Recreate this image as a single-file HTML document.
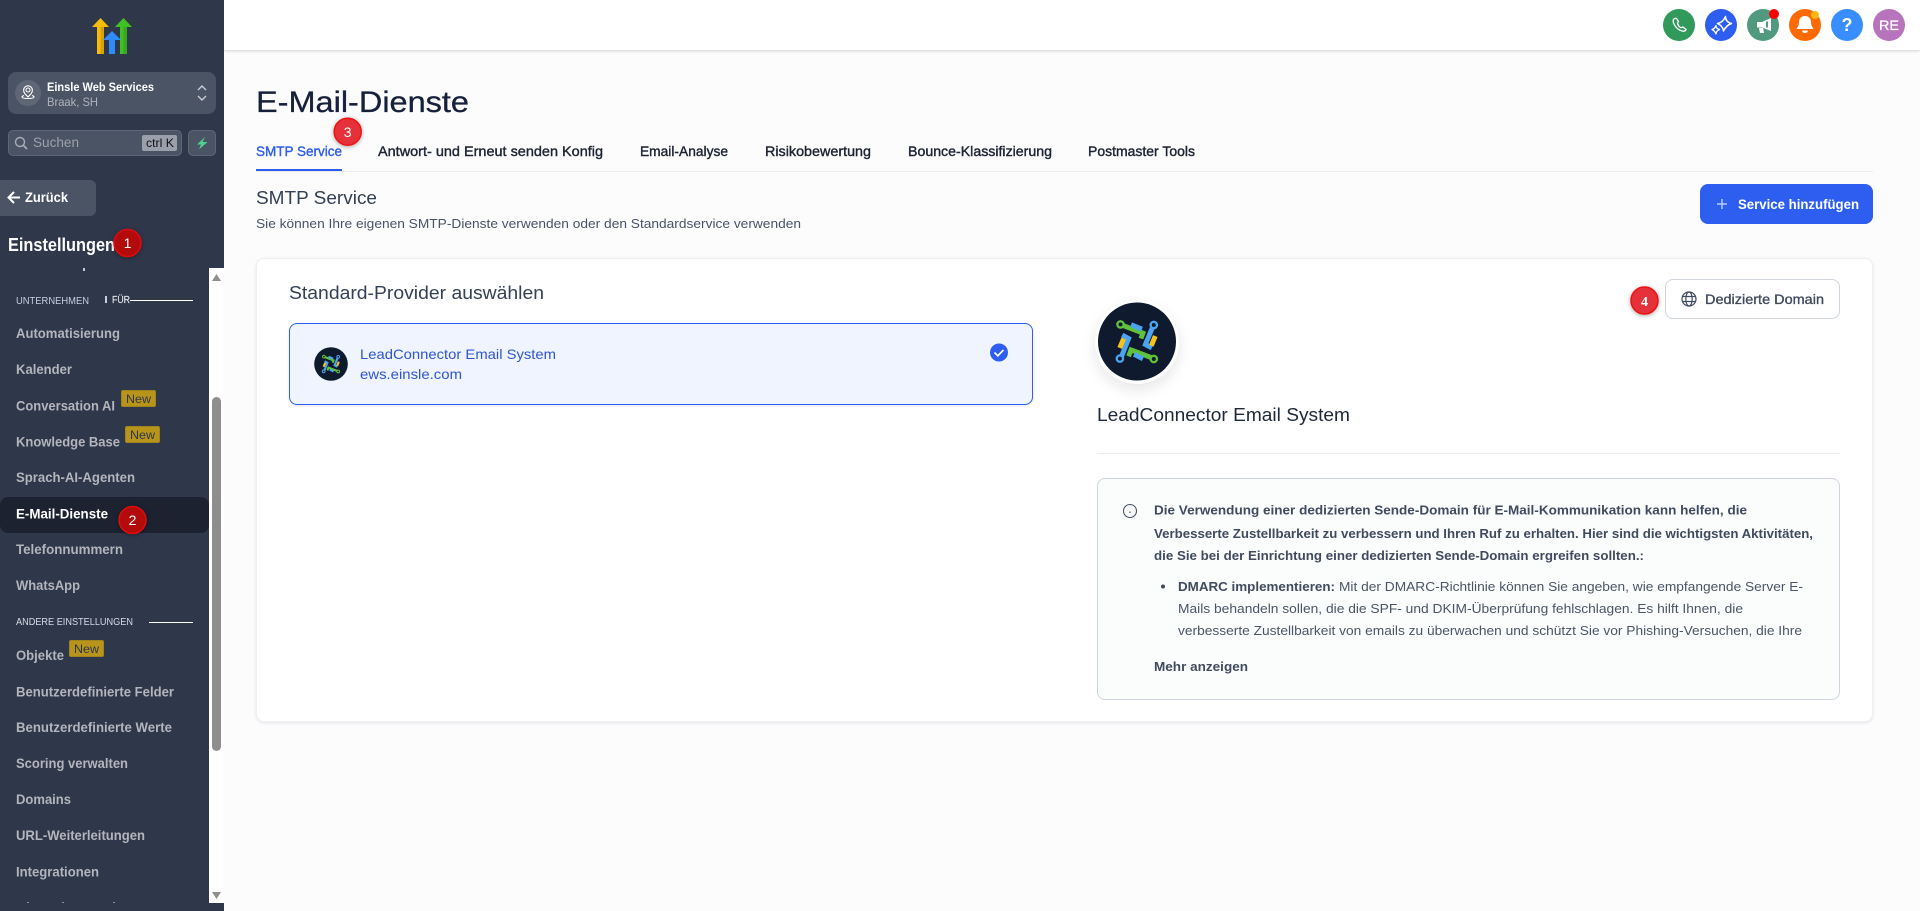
<!DOCTYPE html>
<html lang="de">
<head>
<meta charset="utf-8">
<title>E-Mail-Dienste</title>
<style>
html,body{margin:0;padding:0;width:1920px;height:911px;overflow:hidden;background:#fcfcfd;font-family:"Liberation Sans",sans-serif}
.a{position:absolute;box-sizing:border-box}
svg.o{position:absolute;left:0;top:0;width:1920px;height:911px}
text{font-family:"Liberation Sans",sans-serif;white-space:pre}
.nav{font-size:14px;font-weight:700;fill:#b3b5bc}
.tab{font-size:14px;fill:#1d2433;stroke:#1d2433;stroke-width:.4}
.ib{font-size:13px;fill:#414b5e;font-weight:700}
.ir{font-size:13px;fill:#4b5565}
.new{font-size:12px;fill:#2f374a}
.bn{font-size:14px;fill:#fff;text-anchor:middle}
</style>
</head>
<body>
<div class="a" style="left:224px;top:0;width:1696px;height:50px;background:#fff;box-shadow:0 1px 3px rgba(16,24,40,.18)"></div>
<div class="a" style="left:0;top:0;width:224px;height:911px;background:#2f374a"></div>
<div class="a" style="left:8px;top:72px;width:208px;height:42px;background:#4b5465;border-radius:8px"></div>
<div class="a" style="left:15px;top:80px;width:26px;height:26px;background:#5f6776;border-radius:50%"></div>
<div class="a" style="left:8px;top:130px;width:174px;height:26px;background:#4b5465;border:1px solid #5f6776;border-radius:5px"></div>
<div class="a" style="left:142px;top:135px;width:35px;height:16px;background:#9aa0ab;border-radius:2px"></div>
<div class="a" style="left:188px;top:130px;width:28px;height:26px;background:#4b5465;border:1px solid #5f6776;border-radius:5px"></div>
<div class="a" style="left:0;top:180px;width:96px;height:36px;background:#4b5465;border-radius:0 6px 6px 0"></div>
<div class="a" style="left:0;top:497px;width:209px;height:36px;background:#1d2230;border-radius:8px"></div>
<div class="a" style="left:209px;top:268px;width:15px;height:635px;background:#fff"></div>
<div class="a" style="left:212px;top:397px;width:9px;height:354px;background:#8e8e8e;border-radius:5px"></div>
<div class="a" style="left:121px;top:390px;width:35px;height:17px;background:#b8941a;border:1px solid #a08420;border-radius:2px"></div>
<div class="a" style="left:125px;top:426px;width:35px;height:17px;background:#b8941a;border:1px solid #a08420;border-radius:2px"></div>
<div class="a" style="left:69px;top:640px;width:35px;height:17px;background:#b8941a;border:1px solid #a08420;border-radius:2px"></div>

<div class="a" style="left:256px;top:171px;width:1617px;height:1px;background:#eaecf0"></div>
<div class="a" style="left:256px;top:169px;width:86px;height:2px;background:#2d5ef0"></div>
<div class="a" style="left:1700px;top:184px;width:173px;height:40px;background:#2d5ef0;border-radius:8px"></div>
<div class="a" style="left:256px;top:258px;width:1617px;height:464px;background:#fff;border:1px solid #eef0f3;border-radius:8px;box-shadow:0 1px 3px rgba(16,24,40,.1)"></div>
<div class="a" style="left:289px;top:323px;width:744px;height:82px;background:#eff4ff;border:1px solid #2d5ef0;border-radius:8px;box-shadow:0 1px 2px rgba(16,24,40,.1)"></div>
<div class="a" style="left:1665px;top:279px;width:175px;height:40px;background:#fff;border:1px solid #d0d5dd;border-radius:8px"></div>
<div class="a" style="left:1097px;top:453px;width:743px;height:1px;background:#eaecf0"></div>
<div class="a" style="left:1097px;top:478px;width:743px;height:222px;background:#fbfdfd;border:1px solid #d0d5dd;border-radius:8px"></div>
<div class="a" style="left:1095px;top:300px;width:84px;height:84px;background:#fff;border-radius:50%;box-shadow:0 6px 14px rgba(16,24,40,.1)"></div>

<svg class="o" viewBox="0 0 1920 911" xmlns="http://www.w3.org/2000/svg">
<defs>
<symbol id="lc" viewBox="-40 -40 80 80">
<circle r="39.5" fill="#101a2e"/>
<g fill="none" stroke-width="5">
<path d="M-15-16.5L6-8.5L4-3" stroke="#5fc23a"/>
<circle cx="-16.7" cy="-17.3" r="3.2" fill="#101a2e" stroke="#5fc23a" stroke-width="2.4"/>
<path d="M15.800-14.500L8.500 3L15 6.500" stroke="#4aa5ee"/>
<circle cx="17" cy="-16.7" r="3.2" fill="#101a2e" stroke="#4aa5ee" stroke-width="2.4"/>
<path d="M15 16.500L-6 8.500L-8.500 15" stroke="#5fc23a"/>
<circle cx="17" cy="17.700" r="3.2" fill="#101a2e" stroke="#5fc23a" stroke-width="2.4"/>
<path d="M-15.800 15.500L-8.500-3L-15-6.500" stroke="#4aa5ee"/>
<circle cx="-17.300" cy="17.300" r="3.2" fill="#101a2e" stroke="#4aa5ee" stroke-width="2.4"/>
<path d="M-6-17L5-12.500M-3 13L6 17.500" stroke="#4aa5ee"/>
<path d="M-13.500-3L-17.500 6.500M18.500-5.500L14.500 4.200" stroke="#f8c21c"/>
</g>
</symbol>
</defs>

<!-- logo -->
<path d="M92 27L100.500 18L109 27H104V54H97V27Z" fill="#f9bc06"/>
<path d="M100.500 27H104V54H100.500Z" fill="#d9a208"/>
<path d="M115 27L123.500 18L132 27H127V54H120V27Z" fill="#3fc121"/>
<path d="M123.500 27H127V54H123.500Z" fill="#37a81f"/>
<path d="M103 40L112 31L121 40H115V54H109V40Z" fill="#2f8bf7"/>

<!-- org switch -->
<g fill="none" stroke="#fff" stroke-width="1.100">
<circle cx="28" cy="90" r="2"/>
<path d="M28 97C25 94 23.600 92.500 23.600 90.200A4.400 4.400 0 0 1 32.400 90.200C32.400 92.500 31 94 28 97Z"/>
<path d="M24 95.500C22.500 96 22 96.500 22 97C22 98 24.500 98.500 28 98.500S34 98 34 97C34 96.500 33.500 96 32 95.500"/>
<path d="M198 90L202 86L206 90M198 96L202 100L206 96" stroke="#c9ccd2" stroke-width="1.400"/>
<circle cx="20" cy="142" r="4.500" stroke="#a8acb5" stroke-width="1.400"/>
<path d="M23.500 145.500L27 149" stroke="#a8acb5" stroke-width="1.600"/>
</g>
<text x="47" y="91" font-size="12" font-weight="700" fill="#fff" textLength="107" lengthAdjust="spacingAndGlyphs">Einsle Web Services</text>
<text x="47" y="106" font-size="12" fill="#b0b3bb" textLength="51" lengthAdjust="spacingAndGlyphs">Braak, SH</text>
<text x="33" y="147" font-size="14" fill="#9ca1ab" textLength="46" lengthAdjust="spacingAndGlyphs">Suchen</text>
<text x="146" y="147" font-size="12" fill="#111" textLength="28" lengthAdjust="spacingAndGlyphs">ctrl K</text>
<path d="M205 137L197 144.500H201L199 149.500L207.500 142H202.500Z" fill="#4fd08f"/>

<path d="M20 197.500H9M14 192L8.500 197.500L14 203" fill="none" stroke="#fff" stroke-width="2"/>
<text x="25" y="202" class="nav" style="fill:#fff" textLength="43" lengthAdjust="spacingAndGlyphs">Zurück</text>
<text x="8" y="251" font-size="18" font-weight="700" fill="#fff" textLength="107" lengthAdjust="spacingAndGlyphs">Einstellungen</text>
<rect x="83" y="268" width="2" height="3" fill="#c5c8ce"/>

<!-- nav -->
<text x="16" y="304" font-size="10" fill="#c4d0e2" textLength="73" lengthAdjust="spacingAndGlyphs">UNTERNEHMEN</text>
<rect x="105" y="296" width="2" height="7" fill="#c4d0e2"/>
<text x="112" y="303" font-size="10" fill="#dfe2e7" stroke="#dfe2e7" stroke-width=".2" textLength="18" lengthAdjust="spacingAndGlyphs">FÜR</text>
<rect x="130" y="300" width="63" height="1" fill="#fff"/>
<text class="nav" x="16" y="338" textLength="104" lengthAdjust="spacingAndGlyphs">Automatisierung</text>
<text class="nav" x="16" y="374" textLength="56" lengthAdjust="spacingAndGlyphs">Kalender</text>
<text class="nav" x="16" y="410.500" textLength="99" lengthAdjust="spacingAndGlyphs">Conversation AI</text>
<text class="nav" x="16" y="446.500" textLength="104" lengthAdjust="spacingAndGlyphs">Knowledge Base</text>
<text class="nav" x="16" y="482" textLength="119" lengthAdjust="spacingAndGlyphs">Sprach-AI-Agenten</text>
<text class="nav" x="16" y="518.500" style="fill:#fff" textLength="92" lengthAdjust="spacingAndGlyphs">E-Mail-Dienste</text>
<text class="nav" x="16" y="554" textLength="107" lengthAdjust="spacingAndGlyphs">Telefonnummern</text>
<text class="nav" x="16" y="590" textLength="64" lengthAdjust="spacingAndGlyphs">WhatsApp</text>
<text x="16" y="625" font-size="10" fill="#d5dbe6" textLength="117" lengthAdjust="spacingAndGlyphs">ANDERE EINSTELLUNGEN</text>
<rect x="149" y="622" width="44" height="1" fill="#fff"/>
<text class="nav" x="16" y="660" textLength="48" lengthAdjust="spacingAndGlyphs">Objekte</text>
<text class="nav" x="16" y="696.500" textLength="158" lengthAdjust="spacingAndGlyphs">Benutzerdefinierte Felder</text>
<text class="nav" x="16" y="732" textLength="156" lengthAdjust="spacingAndGlyphs">Benutzerdefinierte Werte</text>
<text class="nav" x="16" y="768" textLength="112" lengthAdjust="spacingAndGlyphs">Scoring verwalten</text>
<text class="nav" x="16" y="804" textLength="55" lengthAdjust="spacingAndGlyphs">Domains</text>
<text class="nav" x="16" y="840" textLength="129" lengthAdjust="spacingAndGlyphs">URL-Weiterleitungen</text>
<text class="nav" x="16" y="876.500" textLength="83" lengthAdjust="spacingAndGlyphs">Integrationen</text>
<g fill="#8f929b"><rect x="27" y="902" width="2" height="1"/><rect x="62" y="902" width="2" height="1"/><rect x="113" y="902" width="2" height="1"/></g>
<text class="new" x="126" y="403" textLength="25" lengthAdjust="spacingAndGlyphs">New</text>
<text class="new" x="130" y="439" textLength="25" lengthAdjust="spacingAndGlyphs">New</text>
<text class="new" x="74" y="653" textLength="25" lengthAdjust="spacingAndGlyphs">New</text>
<path d="M212 281L216.500 274L221 281Z" fill="#8e8e8e"/>
<path d="M212 892L216.500 899L221 892Z" fill="#8e8e8e"/>

<!-- top icons -->
<circle cx="1679" cy="25" r="16" fill="#319a5a"/>
<path d="M1674 19C1673 20 1673 22 1674 24C1675.500 27 1678 30 1682 31C1684 31.500 1685.500 31 1686 29.500L1683 27C1682 27.500 1681 28 1680.500 27.500C1679 26.500 1678 25 1677.500 23.500C1677.500 23 1678 22 1678.500 21.500L1676.500 18.500C1675.500 18 1674.500 18.500 1674 19Z" fill="none" stroke="#fff" stroke-width="1.300"/>
<circle cx="1721" cy="25" r="16" fill="#2d5ef0"/>
<g fill="none" stroke="#fff" stroke-width="1.500" stroke-linejoin="round">
<path d="M1725.500 16.500Q1725.500 22 1731.500 23.500Q1726.500 25 1723.500 31Q1723 26 1717.500 23.500Q1723 22.500 1725.500 16.500Z"/>
<path d="M1716 25.500Q1716 28.500 1719.500 29.500Q1716.500 30.500 1716 34Q1715 31 1712 29.500Q1715 28.500 1716 25.500Z" stroke-width="1.300"/>
</g>
<circle cx="1763" cy="25" r="16" fill="#519a80"/>
<path d="M1757 22H1762L1771 18V31L1762 27.500H1757Z" fill="#fff"/>
<path d="M1759 28H1763L1764 33H1760Z" fill="#fff"/>
<path d="M1767 21.500V27.500" stroke="#519a80" stroke-width="2"/>
<circle cx="1774" cy="14" r="5" fill="#f00"/>
<circle cx="1805" cy="25" r="16" fill="#ff6a00"/>
<path d="M1805 16C1800.500 16 1799 19.500 1799 22C1799 26 1797 27.500 1796.500 29H1813.500C1813 27.500 1811 26 1811 22C1811 19.500 1809.500 16 1805 16Z" fill="#fff"/>
<path d="M1802 30.500H1808C1807.500 32.500 1806.500 33 1805 33S1802.500 32.500 1802 30.500Z" fill="#fff"/>
<circle cx="1815" cy="15" r="4" fill="#fdb813"/>
<circle cx="1847" cy="25" r="16" fill="#388eff"/>
<text x="1847" y="31" font-size="18" font-weight="700" fill="#fff" text-anchor="middle">?</text>
<circle cx="1889" cy="25" r="16" fill="#b773bb"/>
<text x="1889" y="30" font-size="14" fill="#fff" stroke="#fff" stroke-width=".3" text-anchor="middle" textLength="20" lengthAdjust="spacingAndGlyphs">RE</text>

<!-- header -->
<text x="256" y="112" font-size="30" fill="#16203a" stroke="#16203a" stroke-width=".3" textLength="213" lengthAdjust="spacingAndGlyphs">E-Mail-Dienste</text>
<text class="tab" x="256" y="156" style="fill:#2d5ef0;stroke:#2d5ef0" textLength="86" lengthAdjust="spacingAndGlyphs">SMTP Service</text>
<text class="tab" x="378" y="156" textLength="225" lengthAdjust="spacingAndGlyphs">Antwort- und Erneut senden Konfig</text>
<text class="tab" x="640" y="156" textLength="88" lengthAdjust="spacingAndGlyphs">Email-Analyse</text>
<text class="tab" x="765" y="156" textLength="106" lengthAdjust="spacingAndGlyphs">Risikobewertung</text>
<text class="tab" x="908" y="156" textLength="144" lengthAdjust="spacingAndGlyphs">Bounce-Klassifizierung</text>
<text class="tab" x="1088" y="156" textLength="107" lengthAdjust="spacingAndGlyphs">Postmaster Tools</text>
<text x="256" y="204" font-size="18" fill="#344054" textLength="121" lengthAdjust="spacingAndGlyphs">SMTP Service</text>
<text x="256" y="228" font-size="13" fill="#475467" textLength="545" lengthAdjust="spacingAndGlyphs">Sie können Ihre eigenen SMTP-Dienste verwenden oder den Standardservice verwenden</text>
<path d="M1722 199V209M1717 204H1727" stroke="#b9ccfb" stroke-width="1.500"/>
<text x="1738" y="209" font-size="14" font-weight="700" fill="#fff" textLength="121" lengthAdjust="spacingAndGlyphs">Service hinzufügen</text>

<!-- left column -->
<text x="289" y="299" font-size="18" fill="#344054" textLength="255" lengthAdjust="spacingAndGlyphs">Standard-Provider auswählen</text>
<use href="#lc" x="314" y="347" width="34" height="34"/>
<text x="360" y="359" font-size="14" fill="#2f55d4" textLength="196" lengthAdjust="spacingAndGlyphs">LeadConnector Email System</text>
<text x="360" y="379" font-size="14" fill="#2f55d4" textLength="102" lengthAdjust="spacingAndGlyphs">ews.einsle.com</text>
<circle cx="999" cy="352.500" r="9" fill="#2d5ef0"/>
<path d="M994.500 352.500L997.800 355.800L1003.500 350" fill="none" stroke="#fff" stroke-width="1.700"/>

<!-- right column -->
<g fill="none" stroke="#414b5e" stroke-width="1.200">
<circle cx="1689" cy="299" r="7"/>
<ellipse cx="1689" cy="299" rx="3.200" ry="7"/>
<path d="M1682.500 296.500H1695.500M1682.500 301.500H1695.500"/>
</g>
<text x="1705" y="304" font-size="14" fill="#414b5e" stroke="#414b5e" stroke-width=".35" textLength="119" lengthAdjust="spacingAndGlyphs">Dedizierte Domain</text>
<use href="#lc" x="1097.500" y="302" width="79" height="79"/>
<text x="1097" y="421" font-size="18" fill="#1d2939" textLength="253" lengthAdjust="spacingAndGlyphs">LeadConnector Email System</text>

<circle cx="1130" cy="511" r="6.500" fill="none" stroke="#475467" stroke-width="1.100"/>
<rect x="1129.400" y="511.500" width="1.200" height="1.400" fill="#475467"/>
<text class="ib" x="1154" y="514.500" textLength="593" lengthAdjust="spacingAndGlyphs">Die Verwendung einer dedizierten Sende-Domain für E-Mail-Kommunikation kann helfen, die</text>
<text class="ib" x="1154" y="538" textLength="659" lengthAdjust="spacingAndGlyphs">Verbesserte Zustellbarkeit zu verbessern und Ihren Ruf zu erhalten. Hier sind die wichtigsten Aktivitäten,</text>
<text class="ib" x="1154" y="560" textLength="490" lengthAdjust="spacingAndGlyphs">die Sie bei der Einrichtung einer dedizierten Sende-Domain ergreifen sollten.:</text>
<circle cx="1163" cy="586.500" r="2" fill="#414b5e"/>
<text class="ib" x="1178" y="591" textLength="157" lengthAdjust="spacingAndGlyphs">DMARC implementieren:</text>
<text class="ir" x="1339" y="591" textLength="464" lengthAdjust="spacingAndGlyphs">Mit der DMARC-Richtlinie können Sie angeben, wie empfangende Server E-</text>
<text class="ir" x="1178" y="613" textLength="565" lengthAdjust="spacingAndGlyphs">Mails behandeln sollen, die die SPF- und DKIM-Überprüfung fehlschlagen. Es hilft Ihnen, die</text>
<text class="ir" x="1178" y="635" textLength="624" lengthAdjust="spacingAndGlyphs">verbesserte Zustellbarkeit von emails zu überwachen und schützt Sie vor Phishing-Versuchen, die Ihre</text>
<text class="ib" x="1154" y="671" textLength="94" lengthAdjust="spacingAndGlyphs">Mehr anzeigen</text>

<!-- annotation badges -->
<g style="filter:drop-shadow(0 1px 2px rgba(0,0,0,.35))">
<circle cx="127.500" cy="243" r="13.500" fill="#b30b0b" stroke="#e00c0c" stroke-width="1.500"/>
<circle cx="132.500" cy="520" r="13.500" fill="#b30b0b" stroke="#e00c0c" stroke-width="1.500"/>
<circle cx="347.700" cy="131.700" r="13.500" fill="#e5323a" stroke="#f01010" stroke-width="1.500"/>
<circle cx="1644.500" cy="300.500" r="13.500" fill="#e5323a" stroke="#f01010" stroke-width="1.500"/>
</g>
<text class="bn" x="127.500" y="248">1</text>
<text class="bn" x="132.500" y="525">2</text>
<text class="bn" x="347.700" y="137">3</text>
<text class="bn" x="1644.500" y="306" font-weight="700" style="font-family:'Liberation Serif',serif">4</text>
</svg>
</body>
</html>
